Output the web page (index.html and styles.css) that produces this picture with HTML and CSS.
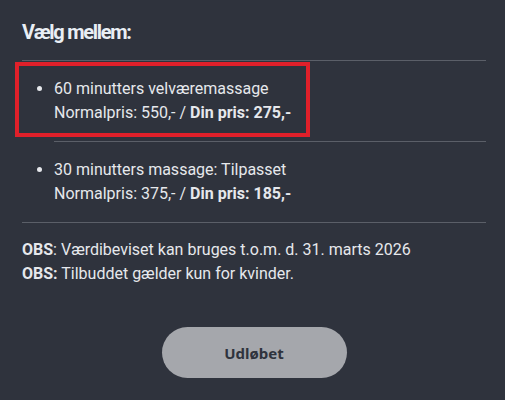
FILE: index.html
```html
<!DOCTYPE html>
<html lang="da">
<head>
    <meta charset="UTF-8">
    <meta name="viewport" content="width=device-width, initial-scale=1.0">
    <title>Vælg mellem</title>
    <link rel="stylesheet" href="styles.css">
</head>
<body>
    <div class="offer">
        <h2 class="offer-title">Vælg mellem:</h2>
        <ul class="offer-list">
            <li class="offer-item selected">
                60 minutters velværemassage<br>
                Normalpris: 550,- / <b>Din pris: 275,-</b>
                <span class="highlight"></span>
            </li>
            <li class="offer-item">
                30 minutters massage: Tilpasset<br>
                Normalpris: 375,- / <b>Din pris: 185,-</b>
            </li>
        </ul>
        <div class="notes">
            <b>OBS</b>: Værdibeviset kan bruges t.o.m. d. 31. marts 2026<br>
            <b>OBS:</b> Tilbuddet gælder kun for kvinder.
        </div>
        <div class="actions">
            <button class="expired-button" disabled>Udløbet</button>
        </div>
    </div>
</body>
</html>
```

FILE: styles.css
```css
body {
    margin: 0;
    background: #2f333d;
    color: #e6e8ec;
    font-family: Roboto, 'Liberation Sans', sans-serif;
    font-size: 16px;
    line-height: 24px;
}

.offer {
    width: 464px;
    padding: 20px 19px 0 22px;
}

.offer-title {
    margin: 0 0 16px;
    font-size: 20px;
    line-height: 24px;
    font-weight: 700;
    letter-spacing: -1.3px;
    color: #e9eef4;
}

.offer-list {
    margin: 0;
    padding: 0 0 0 32px;
    border-top: 1px solid #5b5f68;
    border-bottom: 1px solid #5b5f68;
}

.offer-item {
    position: relative;
    padding: 16px 0;
}

.offer-item + .offer-item {
    border-top: 1px solid #5b5f68;
}

.offer-item b,
.notes b {
    font-weight: 700;
}

.highlight {
    position: absolute;
    top: 1px;
    left: -39px;
    width: 287px;
    height: 67px;
    border: 4px solid #e0202a;
}

.notes {
    padding-top: 15px;
}

.actions {
    display: flex;
    justify-content: center;
    margin-top: 41px;
}

.expired-button {
    width: 185px;
    height: 51px;
    border: none;
    border-radius: 26px;
    background: #a5a7ac;
    color: #2f333d;
    font-family: 'Noto Sans', sans-serif;
    font-size: 15px;
    font-weight: 700;
    cursor: default;
}
```
